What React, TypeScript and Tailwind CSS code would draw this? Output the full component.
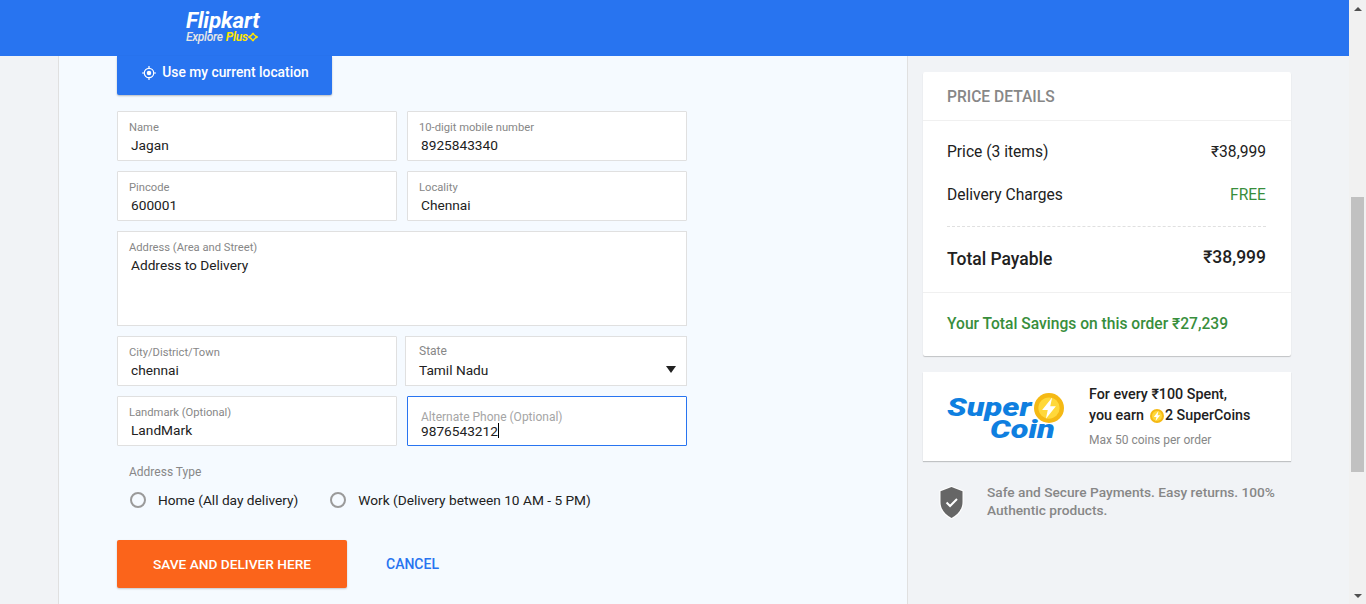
const FONT = "font-['Roboto','Liberation_Sans',sans-serif]";

/** 带浮动标签的输入框 */
function Field({ label, value, className = '' }: { label: string; value: string; className?: string }) {
  return (
    <div className={`h-[50px] border border-[#e0e0e0] bg-white pl-3 pt-[9px] rounded-[1px] ${className}`}>
      <div className="text-[11.2px] leading-[14px] text-[#878787] -ml-px">{label}</div>
      <div className="text-[13.7px] leading-[20px] pl-px text-[#212121]">{value}</div>
    </div>
  );
}

function Radio({ label }: { label: string }) {
  return (
    <div className="flex items-center gap-3">
      <span className="w-4 h-4 rounded-full border-2 border-[#9a9a9a]" />
      <span className="text-[13.7px] leading-5 text-[#212121]">{label}</span>
    </div>
  );
}

function Bolt({ className }: { className: string }) {
  return (
    <svg viewBox="0 0 24 24" className={className}>
      <circle cx="12" cy="12" r="12" fill="#f5b914" />
      <circle cx="12" cy="12" r="8.500" fill="#ffd83a" />
      <path d="M14.500 3.500 6.500 13.500h4.500l-1.500 7 8-10h-4.500z" fill="#fff" />
    </svg>
  );
}

export default function App() {
  return (
    <div className={`${FONT} h-[604px] overflow-hidden flex bg-[#f1f3f6]`}>
      <div className="flex-1 min-w-0">
        <header className="h-14 bg-[#2874f0] pl-[186px] pt-[10px] text-white">
          <div className="italic font-bold text-[22.5px] leading-[20px] tracking-[-0.2px]">Flipkart</div>
          <div className="flex items-center italic text-[12px] leading-[14px] font-medium tracking-[-0.3px]">
            <span className="text-[#e6e6e6]">Explore</span>
            <span className="text-[#ffe500] font-bold ml-[3px]">Plus</span>
            <svg viewBox="0 0 12 12" className="w-[10px] h-[10px]" fill="none" stroke="#ffe500" strokeWidth="1.8">
              <path d="M6 1c.6 2.400 1.600 3.400 5 5-3.400 1.600-4.400 2.600-5 5-.6-2.400-1.600-3.400-5-5 3.400-1.600 4.400-2.600 5-5z" />
            </svg>
          </div>
        </header>

        <div className="flex pl-[58px]">
          {/* 左侧地址表单 */}
          <main className="w-[850px] h-[548px] bg-[#f5faff] border-x border-[#e0e0e0] pl-[58px]">
            <button className="h-[39px] w-[215px] bg-[#2874f0] text-white text-[13.8px] font-medium flex items-center justify-center gap-[6px] pb-[6px] pl-[2px] rounded-b-[2px] shadow-[0_1px_2px_0_rgba(0,0,0,0.26)]">
              <svg viewBox="0 0 16 16" className="w-[14px] h-[14px]" fill="none" stroke="white">
                <circle cx="8" cy="8" r="5.400" strokeWidth="1.400" />
                <circle cx="8" cy="8" r="2.600" fill="white" stroke="none" />
                <path d="M8 0v2.600M8 13.400V16M0 8h2.600M13.400 8H16" strokeWidth="1.400" />
              </svg>
              Use my current location
            </button>

            <div className="w-[570px] mt-4 flex flex-col gap-[10px]">
              <div className="flex gap-[10px]">
                <Field className="w-[280px]" label="Name" value="Jagan" />
                <Field className="w-[280px]" label="10-digit mobile number" value="8925843340" />
              </div>
              <div className="flex gap-[10px]">
                <Field className="w-[280px]" label="Pincode" value="600001" />
                <Field className="w-[280px]" label="Locality" value="Chennai" />
              </div>
              <div className="h-[95px] border border-[#e0e0e0] bg-white pl-3 pt-[9px]">
                <div className="text-[11.2px] leading-[14px] text-[#878787] -ml-px">Address (Area and Street)</div>
                <div className="text-[13.7px] leading-[20px] pl-px text-[#212121]">Address to Delivery</div>
              </div>
              <div className="flex gap-2">
                <Field className="w-[280px]" label="City/District/Town" value="chennai" />
                <div className="relative w-[282px] h-[50px] border border-[#e0e0e0] bg-white pl-[13px] pt-[7px]">
                  <div className="text-[12px] leading-[14px] text-[#878787]">State</div>
                  <div className="text-[13.7px] leading-[20px] text-[#212121] mt-[2px]">Tamil Nadu</div>
                  <span className="absolute right-[10px] top-[29px] w-0 h-0 border-x-[5px] border-x-transparent border-t-[7px] border-t-[#212121]" />
                </div>
              </div>
              <div className="flex gap-[10px]">
                <Field className="w-[280px]" label="Landmark (Optional)" value="LandMark" />
                <div className="w-[280px] h-[50px] border border-[#2874f0] bg-white pl-[13px] pt-[14px] rounded-[1px]">
                  <div className="text-[12px] leading-[12px] text-[#a5a5a5]">Alternate Phone (Optional)</div>
                  <div className="flex items-center text-[13.7px] leading-[14px] text-[#212121]">
                    9876543212
                    <span className="w-px h-[15px] bg-black" />
                  </div>
                </div>
              </div>
            </div>

            <div className="mt-[19px] pl-3 text-[12px] leading-[14px] text-[#878787]">Address Type</div>
            <div className="mt-[11px] pl-[13px] flex gap-8">
              <Radio label="Home (All day delivery)" />
              <Radio label="Work (Delivery between 10 AM - 5 PM)" />
            </div>

            <div className="mt-[30px] flex items-center">
              <button className="w-[230px] h-12 bg-[#fb641b] text-white text-[13.7px] font-medium rounded-[2px] shadow-[0_1px_2px_0_rgba(0,0,0,0.2)]">
                SAVE AND DELIVER HERE
              </button>
              <span className="ml-[39px] text-[14px] font-medium text-[#2874f0]">CANCEL</span>
            </div>
          </main>

          {/* 右侧价格明细 */}
          <aside className="ml-[15px] w-[368px] pt-4">
            <div className="bg-white rounded-[2px] shadow-[0_1px_1px_0_rgba(0,0,0,0.2)]">
              <div className="h-[49px] border-b border-[#f0f0f0] pl-6 pt-[3px] flex items-center text-[15.6px] font-medium text-[#878787]">PRICE DETAILS</div>
              <div className="pl-6 pr-[25px] pt-[21px] border-b border-[#f0f0f0] h-[172px]">
                <div className="flex justify-between text-[15.6px] leading-5 text-[#212121]">
                  <span>Price (3 items)</span>
                  <span>₹38,999</span>
                </div>
                <div className="flex justify-between text-[15.6px] leading-5 text-[#212121] mt-[23px]">
                  <span>Delivery Charges</span>
                  <span className="text-[#388e3c]">FREE</span>
                </div>
                <div className="border-t border-dashed border-[#e0e0e0] mt-[21px]" />
                <div className="flex justify-between text-[17.5px] font-medium leading-6 text-[#212121] mt-[20px]">
                  <span>Total Payable</span>
                  <span className="-mt-[2px]">₹38,999</span>
                </div>
              </div>
              <div className="h-[63px] pl-6 flex items-center text-[15.6px] font-medium text-[#388e3c]">Your Total Savings on this order ₹27,239</div>
            </div>

            <div className="mt-4 h-[89px] bg-white shadow-[0_1px_1px_0_rgba(0,0,0,0.2)] flex items-center pl-6">
              <div className="w-[142px] relative h-[50px] shrink-0 italic font-black text-[#0f7fe0] text-[26px] leading-[26px]">
                <div className="absolute left-0 top-[2px] origin-left scale-x-[1.25]">Super</div>
                <div className="absolute left-[43px] top-[24px] origin-left scale-x-[1.25]">Coin</div>
                <Bolt className="absolute left-[87px] top-[1px] w-[30px] h-[30px]" />
              </div>
              <div className="text-[14.3px] font-medium leading-[21px] text-[#212121] -mt-[1px]">
                <div>For every ₹100 Spent,</div>
                <div className="flex items-center">
                  you earn <Bolt className="w-[14px] h-[14px] ml-[6px] mr-px" />2 SuperCoins
                </div>
                <div className="text-[12px] font-normal text-[#878787] mt-[6px] leading-[16px]">Max 50 coins per order</div>
              </div>
            </div>

            <div className="mt-[22px] flex pl-[15px] gap-[22px]">
              <svg viewBox="3 2 22 30" className="w-[27px] h-[33px] mt-[3px] shrink-0">
                <path d="M14 2 3 6v10.500C3 24 8 29.500 14 32c6-2.500 11-8 11-15.500V6z" fill="#fff" />
                <path d="M14 3 4 6.800v9.700C4 23 8.200 28.200 14 31c5.800-2.800 10-8 10-14.500V6.800z" fill="#666" />
                <path d="m9.500 17 3.200 3.200 6.300-6.400" fill="none" stroke="#fff" strokeWidth="1.800" />
              </svg>
              <div className="text-[13.7px] font-medium leading-[18px] text-[#878787] w-[300px]">
                Safe and Secure Payments. Easy returns. 100% Authentic products.
              </div>
            </div>
          </aside>
        </div>
      </div>

      {/* 滚动条 */}
      <div className="w-[17px] shrink-0 bg-[#f1f1f1] flex flex-col">
        <div className="h-[17px] flex items-center justify-center">
          <span className="w-0 h-0 border-x-[4px] border-x-transparent border-b-[4px] border-b-[#505050]" />
        </div>
        <div className="mt-[180px] h-[275px] w-[13px] mx-auto bg-[#c1c1c1]" />
        <div className="mt-auto h-[17px] flex items-center justify-center">
          <span className="w-0 h-0 border-x-[4px] border-x-transparent border-t-[4px] border-t-[#505050]" />
        </div>
      </div>
    </div>
  );
}
